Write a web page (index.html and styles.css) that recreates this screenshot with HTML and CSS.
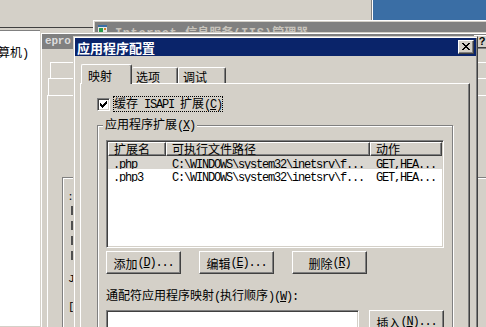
FILE: index.html
```html
<!DOCTYPE html>
<html lang="zh-CN">
<head>
<meta charset="utf-8">
<title>应用程序配置</title>
<link rel="stylesheet" href="styles.css">
</head>
<body>
<div class="desk">
  <div class="mmc">
    <div class="tree"><span class="treetext">算机<span class="a">)</span></span></div>
  </div>
  <div class="blue"></div>
  <div class="iis">
    <div class="ititle">
      <svg class="iicon" width="10" height="10" viewBox="0 0 10 10"><rect x="0" y="1" width="9" height="8" fill="#e8e8e8"/><rect x="0" y="1" width="9" height="2" fill="#3a6ea5"/><rect x="1" y="4" width="4" height="4" fill="#2a9a4a"/><rect x="6" y="4" width="2" height="2" fill="#d08030"/></svg>
      <span class="ittext"><span class="a">Internet </span>信息服务<span class="a">(IIS)</span>管理器</span>
    </div>
  </div>
  <div class="epro">
    <div class="etitle"><span class="a et">epro</span><span class="help">?</span></div>
    <div class="ebody">
      <div class="er1"></div>
      <div class="er2"></div>
      <div class="epanel">
        <div class="egrp">
          <span class="colon">:</span>
          <span class="bar"></span>
          <span class="bar"></span>
          <span class="bar"></span>
          <span class="bar"></span>
          <span class="frag">J</span>
          <span class="frag f2">[</span>
        </div>
      </div>
    </div>
  </div>
  <div class="dlg">
    <div class="title">
      <span class="ttext">应用程序配置</span>
      <span class="close"><svg width="8" height="7" viewBox="0 0 8 7"><path d="M0 0h2v1h-2z M6 0h2v1h-2z M1 1h2v1h-2z M5 1h2v1h-2z M2 2h4v1h-4z M3 3h2v1h-2z M2 4h4v1h-4z M1 5h2v1h-2z M5 5h2v1h-2z M0 6h2v1h-2z M6 6h2v1h-2z" fill="#000"/></svg></span>
    </div>
    <div class="body">
      <div class="tabs">
        <div class="tab on">映射</div>
        <div class="tab t2">选项</div>
        <div class="tab t3">调试</div>
      </div>
      <div class="panel">
        <div class="chk">
          <span class="box"><svg width="7" height="7" viewBox="0 0 7 7"><path d="M6 0h1v1h-1z M5 1h2v1h-2z M0 2h1v1h-1z M4 2h3v1h-3z M0 3h2v1h-2z M3 3h3v1h-3z M0 4h5v1h-5z M1 5h3v1h-3z M2 6h1v1h-1z" fill="#000"/></svg></span>
          <span class="focus">缓存<span class="a"> ISAPI </span>扩展<span class="a">(<u>C</u>)</span></span>
        </div>
        <fieldset class="grp">
          <legend>应用程序扩展<span class="a">(<u>X</u>)</span></legend>
          <div class="lv">
            <div class="hdr">
              <div class="h c1">扩展名</div>
              <div class="h c2">可执行文件路径</div>
              <div class="h c3">动作</div>
            </div>
            <div class="row sel">
              <div class="c c1"><span class="a">.php</span></div>
              <div class="c c2"><span class="a">C:\WINDOWS\system32\inetsrv\f...</span></div>
              <div class="c c3"><span class="a">GET,HEA...</span></div>
            </div>
            <div class="row">
              <div class="c c1"><span class="a">.php3</span></div>
              <div class="c c2"><span class="a">C:\WINDOWS\system32\inetsrv\f...</span></div>
              <div class="c c3"><span class="a">GET,HEA...</span></div>
            </div>
          </div>
          <div class="btns">
            <div class="btn">添加<span class="a">(<u>D</u>)...</span></div>
            <div class="btn">编辑<span class="a">(<u>E</u>)...</span></div>
            <div class="btn">删除<span class="a">(<u>R</u>)</span></div>
          </div>
          <div class="lbl">通配符应用程序映射<span class="a">(</span>执行顺序<span class="a">)(<u>W</u>):</span></div>
          <div class="wild">
            <div class="lb"></div>
            <div class="btn">插入<span class="a">(<u>N</u>)...</span></div>
          </div>
        </fieldset>
      </div>
    </div>
  </div>
</div>
</body>
</html>
```
FILE: styles.css
```css
html, body {
  margin: 0;
  padding: 0;
  overflow: hidden;
}
body {
  width: 486px;
  height: 327px;
  background: #d4d0c8;
  font-family: "Noto Sans CJK SC", sans-serif;
  font-size: 12px;
  line-height: 13px;
  color: #000;
}
.a {
  font-family: "Liberation Mono", monospace;
  font-size: 12px;
  letter-spacing: -1.2px;
}
u { text-decoration: underline; text-underline-offset: 1px; }

.desk {
  position: relative;
  width: 486px;
  height: 327px;
  overflow: hidden;
  background: #d4d0c8;
}

/* left MMC window */
.mmc {
  position: absolute;
  left: 0;
  top: 27px;
  width: 94px;
  height: 300px;
  border-top: 1px solid #404040;
}
.tree {
  margin-top: 2px;
  width: 40px;
  height: 296px;
  background: #fff;
  border-top: 1px solid #808080;
  box-sizing: border-box;
  padding-top: 14px;
  overflow: hidden;
  white-space: nowrap;
}
.treetext { margin-left: -2px; }

/* desktop strip top right */
.blue {
  position: absolute;
  left: 371px;
  top: 0;
  width: 120px;
  height: 20px;
  background: #3a6ea5;
  border-left: 1px solid #808080;
  box-shadow: inset 1px 0 #fff;
}

/* IIS manager window behind */
.iis {
  position: absolute;
  left: 93px;
  top: 20px;
  width: 420px;
  height: 40px;
  background: #d4d0c8;
  border-top: 1px solid #fff;
  border-left: 1px solid #fff;
  padding: 1px 0 0 1px;
}
.ititle {
  height: 16px;
  background: #808080;
  color: #c8c4bc;
  font-weight: bold;
  display: flex;
  align-items: flex-start;
  padding: 1px 0 0 3px;
  white-space: nowrap;
}
.iicon { display: block; margin-top: 1px; }
.ittext { margin-left: 7px; margin-top: 2px; }
.ittext .a { letter-spacing: 0.6px; }

/* epro properties window */
.epro {
  position: absolute;
  left: 40px;
  top: 32px;
  width: 456px;
  height: 310px;
  background: #d4d0c8;
  border: 1px solid #d4d0c8;
  padding: 1px;
  box-shadow: inset 1px 1px #fff;
}
.etitle {
  height: 15px;
  background: #808080;
  display: flex;
  align-items: center;
  padding-left: 3px;
}
.et {
  color: #dcdcdc;
  font-weight: bold;
  font-size: 11px;
  letter-spacing: -0.2px;
}
.help {
  margin-left: auto;
  margin-right: 8px;
  width: 16px;
  height: 13px;
  box-sizing: border-box;
  background: #d4d0c8;
  border: 1px solid;
  border-color: #fff #404040 #404040 #fff;
  font-family: "Liberation Sans", sans-serif;
  font-weight: bold;
  font-size: 11px;
  line-height: 11px;
  text-align: center;
}
.er1 {
  margin: 13px 0 0 8px;
  height: 16px;
  box-sizing: border-box;
  border-top: 1px solid #fff;
  border-left: 1px solid #fff;
}
.er2 {
  margin-left: 6px;
  height: 17px;
  box-sizing: border-box;
  border-top: 1px solid #fff;
  border-left: 1px solid #fff;
}
.epanel {
  margin-left: 5px;
  height: 240px;
  border-top: 1px solid #fff;
  border-left: 1px solid #fff;
  padding: 81px 0 0 14px;
}
.egrp {
  height: 160px;
  border-top: 1px solid #808080;
  border-left: 1px solid #808080;
  box-shadow: inset 1px 1px #fff;
  display: flex;
  flex-direction: column;
  align-items: flex-start;
  padding: 12px 0 0 6px;
}
.colon { font-size: 11px; line-height: 10px; height: 10px; }
.bar {
  width: 2px;
  height: 9px;
  background: #505050;
  margin-top: 6px;
  margin-left: 2px;
}
.frag {
  font-family: "Liberation Mono", monospace;
  font-size: 11px;
  line-height: 10px;
  margin-top: 14px;
  margin-left: -1px;
}
.f2 { margin-top: 18px; }

/* main dialog */
.dlg {
  position: absolute;
  left: 73px;
  top: 36px;
  width: 401px;
  height: 310px;
  background: #d4d0c8;
  border: 1px solid;
  border-color: #d4d0c8 #404040 #404040 #d4d0c8;
  padding: 1px;
  box-shadow: inset 1px 1px #fff, inset -1px -1px #808080;
}
.title {
  height: 18px;
  background: #0a246a;
  color: #fff;
  display: flex;
  align-items: center;
  padding: 0 2px 0 2px;
}
.ttext {
  font-weight: bold;
  font-size: 13px;
}
.close {
  margin-left: auto;
  width: 16px;
  height: 14px;
  box-sizing: border-box;
  background: #d4d0c8;
  border: 1px solid;
  border-color: #fff #404040 #404040 #fff;
  box-shadow: inset -1px -1px #808080;
  display: flex;
  align-items: center;
  justify-content: center;
  padding: 0 1px 1px 0;
}
.close svg { display: block; }

.body {
  padding: 7px 6px 0 5px;
}
.tabs {
  display: flex;
  align-items: flex-end;
  height: 20px;
  margin-left: 1px;
}
.tab {
  box-sizing: border-box;
  height: 16px;
  padding: 2px 0 0 4px;
  border-top: 1px solid #fff;
  border-left: 1px solid #fff;
  border-right: 1px solid #404040;
  box-shadow: inset -1px 0 #808080;
  border-radius: 2px 2px 0 0;
  background: #d4d0c8;
}
.tab.on {
  width: 51px;
  height: 20px;
  margin-bottom: -1px;
  padding: 4px 0 0 6px;
  position: relative;
  z-index: 1;
}
.t2 { width: 46px; border-left: none; }
.t3 { width: 48px; border-left: 1px solid #fff; }

.panel {
  height: 300px;
  border: 1px solid;
  border-color: #fff #404040 #404040 #fff;
  box-shadow: inset -1px -1px #808080;
  padding: 13px 16px 0 16px;
}
.chk {
  display: flex;
  align-items: center;
  height: 14px;
}
.box {
  width: 13px;
  height: 13px;
  box-sizing: border-box;
  background: #fff;
  border: 1px solid;
  border-color: #808080 #fff #fff #808080;
  box-shadow: inset 1px 1px #404040, inset -1px -1px #d4d0c8;
  padding: 2px;
}
.box svg { display: block; }
.focus {
  margin-left: 3px;
  border: 1px dotted #000;
  line-height: 12px;
  white-space: nowrap;
}

.grp {
  margin: 6px 0 0 0;
  padding: 7px 8px 0 8px;
  border: 1px solid #808080;
  box-shadow: 1px 1px 0 #fff, inset 1px 1px 0 #fff;
  height: 260px;
  min-width: 0;
}
.grp legend {
  padding: 0 2px;
  margin-left: -3px;
  background: #d4d0c8;
  line-height: 13px;
}

.lv {
  height: 108px;
  box-sizing: border-box;
  background: #fff;
  border: 1px solid;
  border-color: #808080 #fff #fff #808080;
  box-shadow: inset 1px 1px #404040, inset -1px -1px #d4d0c8;
  padding: 1px;
}
.hdr {
  display: flex;
  height: 14px;
}
.h {
  box-sizing: border-box;
  border: 1px solid;
  border-color: #fff #404040 #404040 #fff;
  box-shadow: inset -1px -1px #808080;
  background: #d4d0c8;
  padding-left: 5px;
  line-height: 12px;
  white-space: nowrap;
  overflow: hidden;
}
.c1 { width: 58px; }
.c2 { width: 204px; }
.c3 { width: 72px; }
.row {
  display: flex;
  height: 13px;
}
.row.sel { background: #d9d6d0; }
.c {
  box-sizing: border-box;
  white-space: nowrap;
  overflow: hidden;
  line-height: 13px;
}
.c.c1 { padding-left: 5px; }
.c.c2 { padding-left: 6px; }
.c.c3 { padding-left: 6px; }

.btns {
  display: flex;
  gap: 18px;
  margin-top: 3px;
}
.btn {
  width: 75px;
  height: 23px;
  box-sizing: border-box;
  border: 1px solid;
  border-color: #fff #404040 #404040 #fff;
  box-shadow: inset -1px -1px #808080;
  display: flex;
  align-items: center;
  justify-content: center;
  white-space: nowrap;
  padding-top: 1px;
}
.lbl {
  margin-top: 14px;
  white-space: nowrap;
}
.wild {
  display: flex;
  gap: 10px;
  margin-top: 6px;
  align-items: flex-start;
}
.lb {
  width: 253px;
  height: 60px;
  box-sizing: border-box;
  background: #fff;
  border: 1px solid;
  border-color: #808080 #fff #fff #808080;
  box-shadow: inset 1px 1px #404040, inset -1px -1px #d4d0c8;
}
```
